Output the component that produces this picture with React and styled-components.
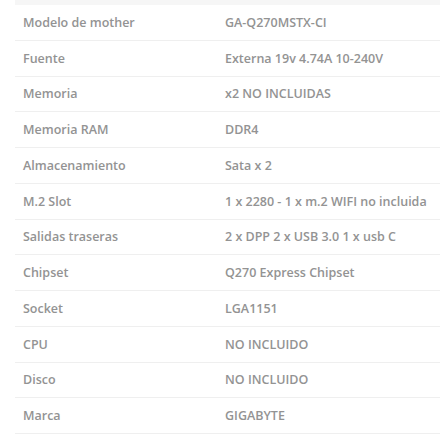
import React from "react";
import styled, { createGlobalStyle } from "styled-components";

const Global = createGlobalStyle`
  html, body { margin: 0; padding: 0; background: #fff; }
  body { font-family: "Open Sans", "Noto Sans", sans-serif; }
`;

const Wrap = styled.div`
  padding-left: 15px;
  width: 440px;
  box-sizing: border-box;
`;

const Band = styled.div`
  height: 5px;
  background: #f6f6f6;
`;

const Row = styled.div`
  display: grid;
  grid-template-columns: 202px 1fr;
  align-items: center;
  height: 35.75px;
  box-sizing: border-box;
  border-bottom: 1px solid #efefef;
`;

const Cell = styled.div`
  padding: 0 8px;
  font-size: 12.5px;
  font-weight: 600;
  color: #939393;
  white-space: nowrap;
`;

const rows = [
  ["Modelo de mother", "GA-Q270MSTX-CI"],
  ["Fuente", "Externa 19v 4.74A 10-240V"],
  ["Memoria", "x2 NO INCLUIDAS"],
  ["Memoria RAM", "DDR4"],
  ["Almacenamiento", "Sata x 2"],
  ["M.2 Slot", "1 x 2280 - 1 x m.2 WIFI no incluida"],
  ["Salidas traseras", "2 x DPP 2 x USB 3.0 1 x usb C"],
  ["Chipset", "Q270 Express Chipset"],
  ["Socket", "LGA1151"],
  ["CPU", "NO INCLUIDO"],
  ["Disco", "NO INCLUIDO"],
  ["Marca", "GIGABYTE"],
];

export default function App() {
  return (
    <>
      <Global />
      <Wrap>
        <Band />
        {rows.map(([k, v]) => (
          <Row key={k}>
            <Cell>{k}</Cell>
            <Cell>{v}</Cell>
          </Row>
        ))}
      </Wrap>
    </>
  );
}
